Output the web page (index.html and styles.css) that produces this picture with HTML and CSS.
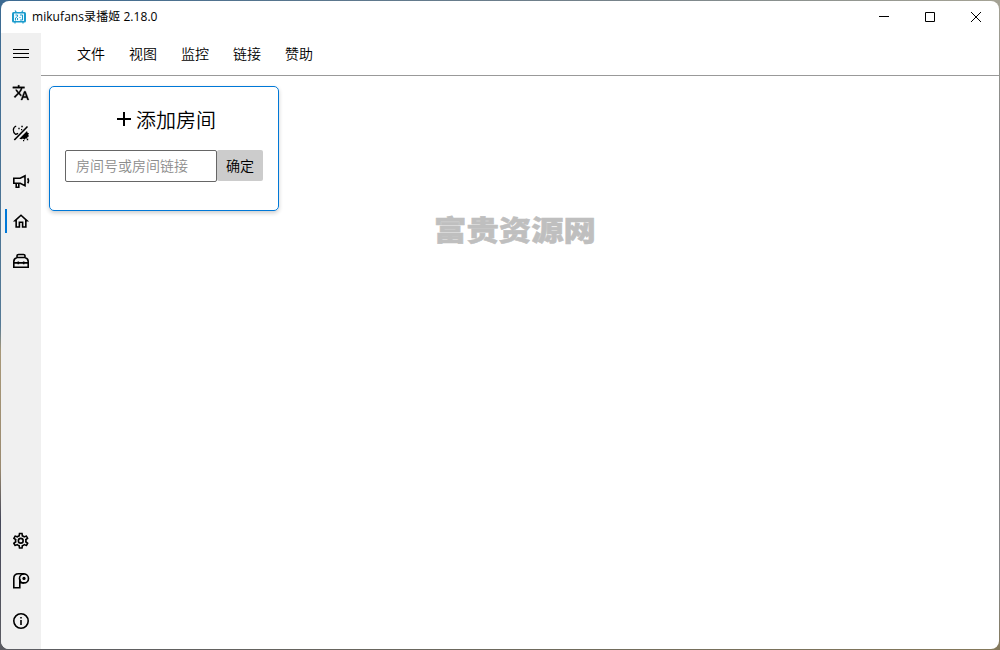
FILE: index.html
```html
<!DOCTYPE html>
<html lang="zh-CN">
<head>
<meta charset="utf-8">
<title>mikufans录播姬 2.18.0</title>
<link rel="stylesheet" href="styles.css">
</head>
<body>
<div class="window">
  <header class="titlebar">
    <svg class="logo" viewBox="0 0 14 14"><path d="M3 .5l1.500 2M11 .5l-1.500 2M3 12v1.500M11 12v1.500" stroke="#1b9bcc" stroke-width="1.2"/><rect x="0" y="2" width="14" height="10.500" rx="1.500" fill="#1b9bcc"/><rect x="2" y="3.500" width="10" height="7.500" fill="#eefaff"/><path d="M3.500 5h2v1.500l-2 1.500v2.500M8 5h2.500v5H8M5.500 8v2M8 7v1" fill="none" stroke="#1b9bcc"/></svg>
    <span class="title">mikufans录播姬 2.18.0</span>
    <div class="controls">
      <span class="control"><svg viewBox="0 0 12 12"><path d="M1 5.500h10"/></svg></span>
      <span class="control"><svg viewBox="0 0 12 12"><path d="M1.500 1.500h9v9h-9z"/></svg></span>
      <span class="control"><svg viewBox="0 0 12 12"><path d="M1 1l10 10M11 1L1 11"/></svg></span>
    </div>
  </header>
  <div class="body">
    <nav class="sidebar">
      <a class="item"><svg viewBox="0 0 20 20"><path class="thin" d="M2 6.500h16M2 10.500h16M2 14.500h16"/></svg></a>
      <a class="item"><svg viewBox="-1.500 -1.200 27.400 27.400"><path class="bold" d="M12.870 15.070L10.330 12.560L10.360 12.530C12.100 10.590 13.340 8.360 14.070 6H17V4H10V2H8V4H1V6H12.170C11.500 7.920 10.440 9.750 9 11.350C8.070 10.320 7.300 9.190 6.690 8H4.690C5.420 9.630 6.420 11.170 7.670 12.560L2.580 17.580L4 19L9 14L12.110 17.110L12.870 15.070M18.500 10H16.500L12 22H14L15.120 19H19.870L21 22H23L18.500 10M15.880 17L17.500 12.670L19.120 17H15.880Z"/></svg></a>
      <a class="item"><svg viewBox="0 0 20 20"><path class="line" d="M3.300 17L16.500 3.500"/><path class="crescent" d="M5.200 3C1.500 4.500 1.500 9 4.500 11.300Q6 11.300 7 10.300"/><path d="M7.300 4.800h1.400v1.400H7.300zM10.300 2.800h1.500v1.500h-1.500zM10 6h1.200v1.200H10zM8.300 15.700l7.700-7.700.5 1.700 1.500.5-.8 1.500.8 1.500-1.500.7-.4 1.700-1.600-.2-1.200 1.300-1.300-1.100-1.500.6zM15.800 15.800h1.400v1.400h-1.400zM12 17h1.200v1.200H12z"/></svg></a>
      <div class="gap"></div>
      <a class="item"><svg viewBox="0 0 20 20"><path class="line" d="M2.800 7.300h6.400L14 4.800v9.900l-4.800-2.500H2.800zM5.200 12.500v3.800h2.600v-3.800M16.700 7.300q1.600 2.500 0 5"/></svg></a>
      <a class="item active"><svg viewBox="-.4 -.9 24.800 24.800"><path d="M12 5.690L17 10.190V18H15V12H9V18H7V10.190L12 5.690M12 3L2 12H5V20H11V14H13V20H19V12H22L12 3Z"/></svg></a>
      <a class="item"><svg viewBox="0 0 20 20"><path class="line" d="M6 7V5q0-1.500 1.500-1.500h5Q14 3.500 14 5v2M6 6.500h8q3.200 1 3.200 4v5.700H2.800v-5.700q0-3 3.200-4zM3 11.900h14M7.300 10.500v2.800M12.700 10.500v2.800"/></svg></a>
      <div class="spacer"></div>
      <a class="item"><svg viewBox="-.2 -.2 25 25"><path d="M12 8A4 4 0 0 1 16 12A4 4 0 0 1 12 16A4 4 0 0 1 8 12A4 4 0 0 1 12 8M12 10A2 2 0 0 0 10 12A2 2 0 0 0 12 14A2 2 0 0 0 14 12A2 2 0 0 0 12 10M10 22C9.750 22 9.540 21.820 9.500 21.580L9.130 18.930C8.500 18.680 7.960 18.340 7.440 17.940L4.950 18.950C4.730 19.030 4.460 18.950 4.340 18.730L2.340 15.270C2.210 15.050 2.270 14.780 2.460 14.630L4.570 12.970L4.500 12L4.570 11L2.460 9.370C2.270 9.220 2.210 8.950 2.340 8.730L4.340 5.270C4.460 5.050 4.730 4.960 4.950 5.050L7.440 6.050C7.960 5.660 8.500 5.320 9.130 5.070L9.500 2.420C9.540 2.180 9.750 2 10 2H14C14.250 2 14.460 2.180 14.500 2.420L14.870 5.070C15.500 5.320 16.040 5.660 16.560 6.050L19.050 5.050C19.270 4.960 19.540 5.050 19.660 5.270L21.660 8.730C21.790 8.950 21.730 9.220 21.540 9.370L19.430 11L19.500 12L19.430 13L21.540 14.630C21.730 14.780 21.790 15.050 21.660 15.270L19.660 18.730C19.540 18.950 19.270 19.040 19.050 18.950L16.560 17.950C16.040 18.340 15.500 18.680 14.870 18.930L14.500 21.580C14.460 21.820 14.250 22 14 22H10M11.250 4L10.880 6.610C9.680 6.860 8.620 7.500 7.850 8.390L5.440 7.350L4.690 8.650L6.800 10.200C6.400 11.370 6.400 12.640 6.800 13.800L4.680 15.360L5.430 16.660L7.860 15.620C8.630 16.500 9.680 17.140 10.870 17.380L11.240 20H12.760L13.130 17.390C14.320 17.140 15.370 16.500 16.140 15.620L18.570 16.660L19.320 15.360L17.200 13.810C17.600 12.640 17.600 11.370 17.200 10.200L19.310 8.650L18.560 7.350L16.150 8.390C15.380 7.500 14.320 6.860 13.120 6.620L12.750 4H11.250Z"/></svg></a>
      <a class="item"><svg viewBox="0 0 20 20"><path class="line" d="M13 2.800H7.500Q2.800 2.800 2.800 7.500V16.700H8.800V11.600Q10 12 13 12M8.800 12V8"/><circle class="line" cx="13" cy="7.400" r="4.500"/><circle cx="13" cy="7.400" r="1.600"/></svg></a>
      <a class="item"><svg viewBox="0 0 20 20"><circle class="line" cx="10" cy="10" r="7.200"/><path d="M9.200 9h1.600v5H9.200zM9.200 6h1.600v1.600H9.200z"/></svg></a>
    </nav>
    <main class="main">
      <div class="menu"><span>文件</span><span>视图</span><span>监控</span><span>链接</span><span>赞助</span></div>
      <div class="content">
        <section class="card">
          <h1 class="heading"><svg class="plus" viewBox="0 0 14 14"><path d="M7 0v14M0 7h14"/></svg><span class="heading-text">添加房间</span></h1>
          <div class="form"><input class="room" type="text" placeholder="房间号或房间链接"><button class="confirm">确定</button></div>
        </section>
        <div class="watermark">富贵资源网</div>
      </div>
    </main>
  </div>
</div>
</body>
</html>
```
FILE: styles.css
```css
* { box-sizing: border-box; }
body { margin: 0; height: 650px; padding: 1px; overflow: hidden; font: 350 14px "Noto Sans CJK SC", sans-serif; color: #000; background: linear-gradient(#3c6a92, #557a96 50%, #a89878 54%, #9a8a70 72%, #45485a 80%, #5b5c62) left / 8px 100% no-repeat, linear-gradient(#a5a395, #858788 20%, #858788 90%, #85795a) right / 8px 100% no-repeat, linear-gradient(90deg, #3c6a92, #75828a 60%, #a5a395) top / 100% 8px no-repeat, linear-gradient(90deg, #5b5c62, #716c5c 60%, #85795a) bottom / 100% 8px no-repeat; }
.window { height: 648px; width: 998px; background: #fff; border-radius: 8px; overflow: hidden; display: flex; flex-direction: column; }
.titlebar { height: 32px; display: flex; align-items: center; flex: none; padding-left: 11px; }
.logo { width: 14px; height: 14px; margin-right: 6px; }
.title { font-family: "Open Sans", "Noto Sans CJK SC", sans-serif; font-size: 12px; line-height: 16px; letter-spacing: .06px; font-weight: 400; }
.controls { margin-left: auto; display: flex; }
.control { width: 46px; height: 32px; display: flex; align-items: center; justify-content: center; }
.control svg { width: 12px; height: 12px; fill: none; stroke: #000; }
.body { flex: 1; display: flex; min-height: 0; }
.sidebar { width: 40px; background: #f0f0f0; display: flex; flex-direction: column; padding-bottom: 8px; }
.item { height: 40px; flex: none; display: flex; align-items: center; justify-content: center; }
.item svg { width: 20px; height: 20px; }
.item .line { fill: none; stroke: #000; stroke-width: 1.6; }
.item .thin { fill: none; stroke: #000; stroke-width: 1; }
.item .bold { stroke: #000; stroke-width: .5; }
.item .crescent { fill: none; stroke: #000; stroke-width: 1.3; }
.active { background: linear-gradient(#0078d7, #0078d7) 4px 8px / 2px 24px no-repeat; }
.gap { height: 8px; flex: none; }
.spacer { flex: 1; }
.main { flex: 1; display: flex; flex-direction: column; }
.menu { height: 43px; border-bottom: 1px solid #999; padding: 0 0 2px 36px; display: flex; align-items: center; gap: 24px; line-height: 20px; }
.content { flex: 1; padding: 10px 8px; position: relative; }
.card { width: 230px; height: 125px; border: 1px solid #0078d7; border-radius: 5px; padding: 17px 15px; box-shadow: 0 2px 4px rgba(0,0,0,.2); }
.heading { margin: 0; padding-left: 5px; height: 30px; display: flex; justify-content: center; align-items: center; gap: 5px; font-size: 20px; font-weight: 350; line-height: 30px; }
.heading-text { padding-top: 2px; }
.plus { width: 14px; height: 14px; stroke: #000; stroke-width: 2; }
.form { display: flex; margin-top: 16px; }
.room { width: 152px; height: 32px; border: 1px solid #666; border-radius: 2px; padding: 0 10px 2px; font: inherit; }
.room::placeholder { color: #8c8c8c; }
.confirm { width: 46px; height: 31px; padding: 0 0 1px; border: 0; border-radius: 2px; background: #ccc; font: inherit; color: #000; }
.watermark { position: absolute; left: 393px; top: 135px; font-size: 32.4px; line-height: 36px; font-weight: 900; color: #bfbfbf; -webkit-text-stroke: .6px #bfbfbf; transform: scaleY(.88); }
```
